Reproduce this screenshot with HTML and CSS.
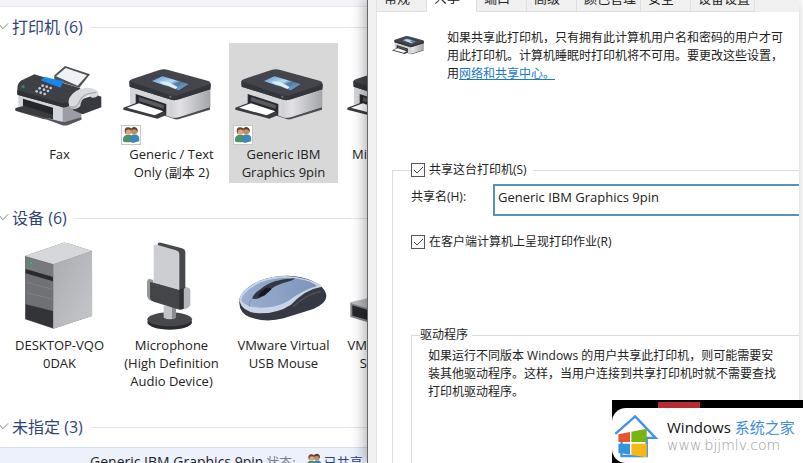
FILE: index.html
```html
<!DOCTYPE html>
<html lang="zh-CN">
<head>
  <meta charset="utf-8">
  <title>设备和打印机</title>
  <link rel="stylesheet" href="styles.css">
</head>
<body>
  <!-- shared icons -->
  <svg class="defs" width="0" height="0" aria-hidden="true">
    <linearGradient id="side" x1="0" x2="1"><stop offset="0" stop-color="#cfd0d4"/><stop offset="0.25" stop-color="#e2e2e5"/><stop offset="1" stop-color="#a4a5aa"/></linearGradient>
    <linearGradient id="screen" x1="0" x2="1" y2="1"><stop offset="0" stop-color="#5c97dc"/><stop offset="0.45" stop-color="#b5dcf2"/><stop offset="0.6" stop-color="#4a7aa6"/><stop offset="1" stop-color="#7fb4e4"/></linearGradient>
    <symbol id="printer" viewBox="148 150 270 270">
      <path d="M157 312 L290 357 Q300 360 312 355 L397 329 L397 319 L290 345Z" fill="#4d4e53"/>
      <path d="M157 255 L278 294 Q290 300 302 296 L398 265 L398 320 L308 349 Q290 356 276 350 L157 312Z" fill="#d5d6d9"/>
      <path d="M278 295 Q292 300 302 296 L398 265 L398 321 L308 350 Q290 356 276 350Z" fill="url(#side)"/>
      <path d="M174 282 L266 312 L266 347 L174 318Z" fill="#292a2f"/>
      <path d="M184 291 L258 315 L258 326 L184 303Z" fill="#5a5b60"/>
      <path d="M137 323 L175 309 L264 338 L264 346 L239 356 L137 329Z" fill="#3b3c41"/>
      <path d="M148 323 L184 310 L257 334 L231 346Z" fill="#fff"/>
      <path d="M155 244 Q156 239 164 237 L245 210 Q259 205 272 210 L392 243 Q400 246 399 256 L398 268 L304 298 Q290 303 276 298 L156 260Z" fill="#44454c"/>
      <path d="M155 244 L276 285 Q290 289 303 285 L399 252 L398 268 L304 298 Q290 303 276 298 L156 260Z" fill="#34353b"/>
      <path d="M223 243 L254 229 L333 252 L303 271Z" fill="url(#screen)"/>
      <path d="M245 246 Q270 240 300 262 L293 267Z" fill="#e1eef2"/>
      <circle cx="278" cy="290" r="3" fill="#3fa060"/>
    </symbol>
    <symbol id="users" viewBox="0 0 20 20">
      <circle cx="7" cy="6" r="3.8" fill="#dba77c"/>
      <path d="M3 6 Q3 1 7 1.500 Q11 2 10.500 5 Q7 3 4.500 5 L4 9Z" fill="#65452e"/>
      <path d="M1 17 Q1 10 5 10 L10 10 Q12 12 11 18 L3 18Z" fill="#4d9169"/>
      <circle cx="13.500" cy="5.500" r="3.700" fill="#c88b60"/>
      <path d="M9.500 5 Q10 1 14 1 Q18 2 17.500 7 L16 4.500 Q13 2.500 9.500 5Z" fill="#53402f"/>
      <path d="M9 17 Q9 10 12 9.500 L16 9.500 Q20 11 19 17 L12 19Z" fill="#3e88b5"/>
    </symbol>
  </svg>

  <main class="desktop">
    <section class="explorer" aria-label="设备和打印机">
      <div class="toolbar"></div>

      <h2 class="group-title"><svg class="chevron" viewBox="0 0 10 8"><path d="M0 2 L3 6 L9 0"/></svg>打印机 (6)</h2>
      <div class="tiles">
        <div class="tile">
          <div class="icon">
            <svg viewBox="47 150 270 270">
              <path d="M165 226 L197 198 L272 223 L240 263 L165 239Z" fill="#505157"/>
              <path d="M170 229 L199 204 L263 226 L235 257Z" fill="#f0f1f5"/>
              <path d="M57 282 L196 321 L246 315 L246 358 L207 374 Q195 377 183 371 L57 335Z" fill="#d3d5dc"/>
              <path d="M190 320 L246 314 L246 358 L205 375 L190 374Z" fill="#9a9ca6"/>
              <path d="M71 296 L161 323 L161 358 L71 332Z" fill="#25262b"/>
              <path d="M48 324 L76 317 L160 344 L160 354 L135 358 L48 332Z" fill="#3a3b41"/>
              <path d="M57 334 L140 358 L185 374 Q197 379 208 374 L246 359 L246 352 L195 367Z" fill="#56575d"/>
              <path d="M54 270 Q53 243 75 237 L105 223 L244 265 Q220 283 217 316 L196 322 Q189 324 180 319 L54 284Z" fill="#3f4046"/>
              <path d="M54 270 L188 310 L217 305 L217 316 L196 322 L180 319 L54 284Z" fill="#303137"/>
              <path d="M124 241 L136 231 L193 244 L183 263Z" fill="#1688ed"/>
              <g fill="#c3cad5"><circle cx="130" cy="257" r="4"/><circle cx="142" cy="260" r="4"/><circle cx="154" cy="264" r="4"/><circle cx="121" cy="265" r="4"/><circle cx="134" cy="269" r="4"/><circle cx="146" cy="273" r="4"/><circle cx="112" cy="274" r="4"/><circle cx="124" cy="278" r="4"/><circle cx="136" cy="282" r="4"/></g>
              <circle cx="71" cy="260" r="5" fill="#2d8c60"/>
              <path d="M220 305 L290 284 L306 290 L306 322 L250 343 L222 331Z" fill="#393a40"/>
              <path d="M210 319 Q199 293 231 272 Q269 254 296 274 Q301 294 278 293 L269 286 Q244 296 243 318 Q227 335 210 319Z" fill="#d9dade"/>
              <path d="M213 320 Q229 326 238 310 Q246 287 268 281 L291 277" fill="none" stroke="#a9abb1" stroke-width="4"/>
            </svg>
          </div>
          <div class="label">Fax</div>
        </div>
        <div class="tile">
          <div class="icon"><svg><use href="#printer"/></svg></div>
          <span class="badge"><svg><use href="#users"/></svg></span>
          <div class="label">Generic / Text<br>Only (副本 2)</div>
        </div>
        <div class="tile selected">
          <div class="icon"><svg><use href="#printer"/></svg></div>
          <span class="badge"><svg><use href="#users"/></svg></span>
          <div class="label">Generic IBM<br>Graphics 9pin</div>
        </div>
        <div class="tile cut">
          <div class="icon"><svg><use href="#printer"/></svg></div>
          <div class="label">Mi</div>
        </div>
      </div>

      <h2 class="group-title"><svg class="chevron" viewBox="0 0 10 8"><path d="M0 2 L3 6 L9 0"/></svg>设备 (6)</h2>
      <div class="tiles">
        <div class="tile">
          <div class="icon">
            <svg viewBox="47 123 270 270">
              <linearGradient id="case" x1="0" x2="1" y2="1"><stop offset="0" stop-color="#aaabaf"/><stop offset="1" stop-color="#c7c8cb"/></linearGradient>
              <path d="M77 168 L190 129 Q198 127 206 130 L278 153 L278 348 L162 386 L77 358Z" fill="#707176"/>
              <path d="M77 168 L190 129 Q198 127 206 130 L278 153 L163 193Z" fill="#d6d7db"/>
              <path d="M162 193 L278 153 L279 347 L162 386Z" fill="url(#case)"/>
              <path d="M79 170 L161 195 L161 232 L79 207Z" fill="#77797d"/>
              <path d="M79 207 L161 231 L161 244 L79 220Z" fill="#292a2d"/>
              <path d="M82 223 L159 246 L159 327 L82 309Z" fill="#707175"/>
              <path d="M83 247 L159 268 M83 278 L159 298" stroke="#8a8b8f" stroke-width="2"/>
              <path d="M79 313 L161 333 L161 384 L79 357Z" fill="#333438"/>
              <circle cx="95" cy="189" r="6" fill="#2f9c62"/>
              <circle cx="95" cy="189" r="2" fill="#7ad09c"/>
            </svg>
          </div>
          <div class="label">DESKTOP-VQO<br>0DAK</div>
        </div>
        <div class="tile">
          <div class="icon">
            <svg viewBox="383 123 270 270">
              <ellipse cx="511" cy="366" rx="67" ry="23" fill="#292a2d"/>
              <ellipse cx="511" cy="358" rx="67" ry="21" fill="#47484c"/>
              <path d="M493 317 H530 V353 Q511 363 493 353Z" fill="#c2c3c6"/>
              <path d="M518 317 H530 V353 L518 357Z" fill="#8b8c90"/>
              <path d="M448 236 L462 240 L462 303 Q446 303 443 287 L443 243Z" fill="#96979b"/>
              <path d="M553 260 L568 263 Q573 266 573 273 L573 315 Q567 327 553 327Z" fill="#b5b6ba"/>
              <path d="M475 132 Q476 126 485 128 L548 145 Q558 148 558 157 L558 264 L540 273 L475 255Z" fill="#47484b"/>
              <path d="M463 140 Q463 132 472 134 L530 151 Q540 154 540 164 L540 272 L463 249Z" fill="#cdced1"/>
              <path d="M452 246 L463 248 L540 270 L553 264 L553 326 Q545 331 536 328 L463 305 Q452 301 452 290Z" fill="#444549"/>
              <path d="M540 270 L553 264 L553 326 L540 328Z" fill="#303134"/>
            </svg>
          </div>
          <div class="label">Microphone<br>(High Definition<br>Audio Device)</div>
        </div>
        <div class="tile">
          <div class="icon">
            <svg viewBox="148 123 270 270">
              <linearGradient id="shell" x1="0" x2="1"><stop offset="0" stop-color="#9bb0d0"/><stop offset="1" stop-color="#7c94bc"/></linearGradient>
              <path d="M149 309 Q145 273 210 242 Q278 218 340 233 Q404 250 410 286 Q412 309 371 327 L282 355 Q227 369 179 351 Q150 339 149 309Z" fill="#363944"/>
              <path d="M149 304 Q146 276 205 244 Q275 216 346 236 Q388 248 397 260 Q346 268 304 314 Q263 341 207 340 Q160 338 149 304Z" fill="#c9d4e4"/>
              <path d="M155 302 Q154 278 210 248 Q278 223 343 240 Q371 247 382 258 Q341 269 297 302 Q257 325 209 323 Q166 320 155 302Z" fill="url(#shell)"/>
              <path d="M187 295 Q192 280 214 266 Q247 238 315 235 Q318 239 278 250 Q241 263 226 286 Q200 302 187 295Z" fill="#343843"/>
              <path d="M205 291 Q209 274 231 263 Q249 262 244 269 L226 285Z" fill="#15181f"/>
              <path d="M187 296 Q176 307 179 320" fill="none" stroke="#6a82a6" stroke-width="2"/>
              <path d="M310 320 Q354 280 395 274" fill="none" stroke="#50535f" stroke-width="4"/>
            </svg>
          </div>
          <div class="label">VMware Virtual<br>USB Mouse</div>
        </div>
        <div class="tile cut">
          <div class="icon">
            <svg viewBox="484 123 270 270">
              <path d="M482 307 L545 292 L545 338 L482 315Z" fill="#b9babd"/>
              <path d="M482 309 L545 328 L545 370 L482 351Z" fill="#85868a"/>
              <path d="M488 316 L545 333 L545 363 L488 347Z" fill="#27282b"/>
            </svg>
          </div>
          <div class="label">VM<br>S</div>
        </div>
      </div>

      <h2 class="group-title"><svg class="chevron" viewBox="0 0 10 8"><path d="M0 2 L3 6 L9 0"/></svg>未指定 (3)</h2>
      <div class="details">
        <span class="details-name">Generic IBM Graphics 9pin</span>
        <span class="details-key">状态:</span>
        <svg class="details-icon"><use href="#users"/></svg>
        <span class="details-state">已共享</span>
      </div>
    </section>

    <section class="dialog" aria-label="打印机属性">
      <nav class="tabs">
        <button class="tab">常规</button>
        <button class="tab active">共享</button>
        <button class="tab">端口</button>
        <button class="tab">高级</button>
        <button class="tab">颜色管理</button>
        <button class="tab">安全</button>
        <button class="tab">设备设置</button>
      </nav>
      <form class="sheet">
        <div class="intro">
          <svg class="intro-icon" viewBox="135 205 265 155"><use href="#printer" x="148" y="150" width="270" height="270"/></svg>
          <p>如果共享此打印机，只有拥有此计算机用户名和密码的用户才可<br>用此打印机。计算机睡眠时打印机将不可用。要更改这些设置，<br>用<a href="#">网络和共享中心。</a></p>
        </div>

        <fieldset class="share">
          <legend>
            <label class="check"><input type="checkbox" checked>共享这台打印机(S)</label>
          </legend>
          <div class="field">
            <label for="shareName">共享名(H):</label>
            <input type="text" id="shareName" value="Generic IBM Graphics 9pin">
          </div>
          <label class="check"><input type="checkbox" checked>在客户端计算机上呈现打印作业(R)</label>

          <fieldset class="drivers">
            <legend>驱动程序</legend>
            <p>如果运行不同版本 Windows 的用户共享此打印机，则可能需要安<br>装其他驱动程序。这样，当用户连接到共享打印机时就不需要查找<br>打印机驱动程序。</p>
          </fieldset>
        </fieldset>
      </form>
    </section>

    <aside class="watermark">
      <div class="watermark-card">
        <svg class="logo" viewBox="0 0 132 132">
          <path d="M22 65 V126 H96 V73 H122 L62 10 L4 61" fill="none" stroke="#3f94e9" stroke-width="7"/>
          <path d="M13 62 L47 56 V85 H13Z" fill="#e9542d"/>
          <path d="M51 55 L96 46 V85 H51Z" fill="#76b512"/>
          <path d="M13 90 H47 V122 L13 117Z" fill="#3794dc"/>
          <path d="M51 90 H96 V130 L51 123Z" fill="#f6b913"/>
        </svg>
        <div>
          <div class="brand">Windows <span>系统之家</span></div>
          <div class="site">www.bjjmlv.com</div>
        </div>
      </div>
    </aside>
  </main>
</body>
</html>
```

FILE: styles.css
```css
* {
  box-sizing: border-box;
}

body {
  margin: 0;
  background: #fff;
  color: #222;
  font-family: "Open Sans", "Noto Sans CJK SC", sans-serif;
  font-size: 13px;
  line-height: 18px;
}

.defs {
  position: absolute;
}

symbol {
  overflow: visible;
}

.desktop {
  position: relative;
  display: flex;
  height: 100vh;
  overflow: hidden;
}

/* devices window */
.explorer {
  flex: 0 0 45.7%;
  display: flex;
  flex-direction: column;
  overflow: hidden;
}

.toolbar {
  flex: none;
  height: 7px;
  margin-bottom: 4px;
  background: #f3f4f9;
  border-bottom: 1px solid #e8e9ed;
}

.group-title {
  flex: none;
  display: flex;
  align-items: center;
  height: 32px;
  margin: 0;
  color: #304577;
  font-size: 16px;
  font-weight: 400;
  white-space: nowrap;
}

.group-title::after {
  content: "";
  flex: 1;
  height: 1px;
  margin-left: 8px;
  background: #e2e3e6;
}

.chevron {
  width: 9px;
  height: 8px;
  margin-right: 3px;
  fill: none;
  stroke: #777;
}

.tiles {
  flex: none;
  display: flex;
  gap: 3px;
  padding-left: 5px;
  margin-bottom: 19px;
}

.tile {
  position: relative;
  flex: 0 0 109px;
  padding: 2px 0;
  text-align: center;
}

.tile.selected {
  background: #d8d8d9;
}

.icon {
  display: flex;
  align-items: center;
  justify-content: center;
  height: 100px;
}

.icon svg {
  width: 90px;
  height: 90px;
  overflow: visible;
}

.label {
  white-space: nowrap;
}

.tile.cut .label {
  width: 26px;
  text-align: right;
}

.badge {
  position: absolute;
  left: 4px;
  top: 82px;
  width: 20px;
  height: 20px;
  background: #fff;
  border: 1px solid #c6c6c6;
}

.badge svg {
  display: block;
  width: 18px;
  height: 18px;
}

.details {
  flex: 1;
  display: flex;
  align-items: flex-start;
  margin-top: 4px;
  padding: 5px 0 0 90px;
  background: #edf1fb;
  border-top: 1px solid #d7dfed;
  white-space: nowrap;
}

.details-name {
  font-size: 14px;
}

.details-key {
  margin-left: 3px;
  color: #777f91;
}

.details-icon {
  flex: none;
  width: 16px;
  height: 16px;
  margin: 0 2px 0 10px;
}

.details-state {
  color: #304577;
}

/* printer properties window */
.dialog {
  flex: 1;
  min-width: 0;
  display: flex;
  flex-direction: column;
  margin-right: 4px;
  padding-left: 8px;
  background: #f0f0f1;
  border-left: 1px solid #66676a;
  box-shadow: -3px 0 12px rgba(0, 0, 0, 0.3);
  z-index: 1;
}

.tabs {
  flex: none;
  display: flex;
  align-items: flex-end;
  height: 12px;
  overflow: hidden;
  border-left: 1px solid #e2e2e2;
}

.tab {
  flex: none;
  min-width: 50px;
  height: 24px;
  padding: 0 4px 3px 7px;
  background: #f0f0f1;
  border: 0;
  border-right: 1px solid #dedede;
  border-bottom: 1px solid #e0e0e0;
  color: #222;
  font: inherit;
  line-height: 18px;
  text-align: left;
}

.tab.active {
  padding-bottom: 6px;
  background: #fff;
  border-bottom-color: #fff;
}

.sheet {
  flex: 1;
  display: flex;
  flex-direction: column;
  padding: 17px 0 0 15px;
  background: #fff;
  border-left: 1px solid #e4e4e4;
  font-size: 12px;
}

.intro {
  display: flex;
  gap: 23px;
  margin-bottom: 78px;
  white-space: nowrap;
}

.intro-icon {
  flex: none;
  width: 32px;
  height: 20px;
  margin-top: 6px;
}

p {
  margin: 0;
}

a {
  color: #1979ca;
}

fieldset {
  min-width: 0;
  margin: 0;
  border: 1px solid #dcdcdc;
  border-right: 0;
  border-bottom: 0;
}

legend {
  padding: 0;
}

.share {
  flex: 1;
  padding: 0 0 0 18px;
}

.check {
  display: flex;
  align-items: center;
  gap: 4px;
  padding-right: 6px;
}

.check input {
  appearance: none;
  width: 14px;
  height: 14px;
  margin: 0;
  background: #fff url("data:image/svg+xml,%3Csvg xmlns='http://www.w3.org/2000/svg' viewBox='0 0 12 12'%3E%3Cpath d='M2 6 L5 9 L11 3' fill='none' stroke='%23444'/%3E%3C/svg%3E");
  border: 1px solid #555;
}

.field {
  display: flex;
  margin: 5px 0 17px;
}

.field label {
  flex: 0 0 82px;
  padding-top: 4px;
}

.field input {
  flex: 1;
  min-width: 0;
  height: 32px;
  padding: 0 4px 6px 3px;
  background: #fff;
  border: 2px solid #5793b3;
  border-right: 0;
  color: #222;
  font: inherit;
  font-size: 13px;
}

.drivers {
  height: 160px;
  margin-top: 75px;
  padding: 3px 0 0 16px;
  white-space: nowrap;
}

.drivers legend {
  margin-left: -8px;
  padding-right: 4px;
}

/* site mark over the bottom right corner */
.watermark {
  position: absolute;
  right: 0;
  bottom: 0;
  z-index: 2;
  padding-top: 8px;
  background: linear-gradient(#b72c32, #b72c32) 46px 2px / 42px 6px no-repeat, #000;
}

.watermark-card {
  display: flex;
  align-items: center;
  gap: 8px;
  width: 191px;
  height: 55px;
  padding-left: 2px;
  background: #fff;
  border-radius: 14px 0 0 14px;
  white-space: nowrap;
}

.logo {
  flex: none;
  width: 45px;
  height: 45px;
}

.brand {
  color: #111;
  font-size: 15px;
}

.brand span {
  color: #3e8fe2;
}

.site {
  color: #999;
  font-family: "DejaVu Sans", sans-serif;
  font-size: 14px;
  font-weight: 200;
}
```
